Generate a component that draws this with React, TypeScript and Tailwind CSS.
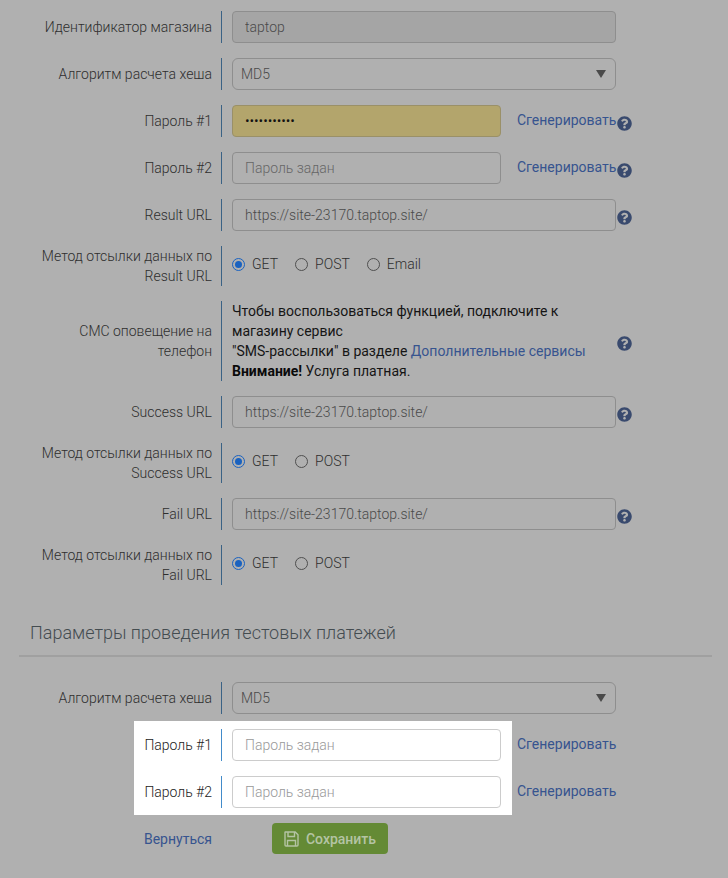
import type { ReactNode } from "react";
import { FaQuestionCircle } from "react-icons/fa";

const URL_VALUE = "https://site-23170.taptop.site/";

function Help() {
  return (
    <span className="mt-[5px] flex w-[16px] shrink-0 justify-center text-[15px] text-[#394a6e]">
      <FaQuestionCircle />
    </span>
  );
}

function SaveIcon() {
  return (
    <svg viewBox="0 0 15 16" className="h-[16px] w-[15px] fill-none stroke-[#b4c4a4] stroke-[1.4]">
      <path d="M1.2 1h10l2.8 2.8v10.2a1 1 0 0 1-1 1H2a1 1 0 0 1-1-1V1.2z" />
      <path d="M4 1v4.5h6.5V1" />
      <path d="M3.5 15V9.5h8V15" />
    </svg>
  );
}

function Row({
  label,
  lit = false,
  children,
}: {
  label: ReactNode;
  lit?: boolean;
  children: ReactNode;
}) {
  return (
    <div className="relative z-10 flex items-stretch">
      <div
        className={`flex w-[222px] shrink-0 items-center justify-end border-r pr-[9px] text-right font-light ${
          lit ? "border-[#428bca] text-[#222222]" : "border-[#3a6285] text-[#2e2e2e]"
        }`}
      >
        <span className="block max-w-[185px]">{label}</span>
      </div>
      <div className="flex min-w-0 flex-1 items-center pl-[10px]">{children}</div>
    </div>
  );
}

function TextField({
  value,
  placeholder,
  short = false,
  readOnly = false,
  tone = "plain",
  type = "text",
}: {
  value?: string;
  placeholder?: string;
  short?: boolean;
  readOnly?: boolean;
  tone?: "plain" | "disabled" | "autofill" | "lit";
  type?: string;
}) {
  const tones = {
    plain: "border-[#8e8e8e] bg-[#b0b0b0] text-[#4a4a4a] placeholder:text-[#666666]",
    disabled: "border-[#8e8e8e] bg-[#a5a5a5] text-[#4a4a4a]",
    autofill: "border-[#9a9068] bg-[#b3a56c] text-[#111111]",
    lit: "border-[#cccccc] bg-white text-[#555555] placeholder:text-[#999999]",
  };
  return (
    <input
      type={type}
      value={value}
      placeholder={placeholder}
      readOnly={readOnly || value !== undefined}
      className={`h-[32px] shrink-0 rounded-[4px] border px-[12px] text-[14px] font-light outline-none ${
        short ? "w-[269px]" : "w-[384px]"
      } ${tones[tone]}`}
    />
  );
}

function HashSelect() {
  return (
    <div className="relative w-[384px]">
      <select
        defaultValue="MD5"
        className="block h-[32px] w-full appearance-none rounded-[6px] border border-[#8e8e8e] bg-[#b0b0b0] px-[8px] text-[14px] font-light text-[#4a4a4a] outline-none"
      >
        <option>MD5</option>
      </select>
      <svg
        viewBox="0 0 10 8"
        className="pointer-events-none absolute right-[10px] top-[12px] h-[8px] w-[10px] fill-[#4a4a4a]"
      >
        <path d="M0 0h10L5 8z" />
      </svg>
    </div>
  );
}

function Generate() {
  return (
    <a href="#" className="ml-[16px] -translate-y-px text-[#37548f]">
      Сгенерировать
    </a>
  );
}

function Radio({ label, checked = false }: { label: string; checked?: boolean }) {
  return (
    <label className="flex items-center">
      <span
        className={`flex h-[13px] w-[13px] items-center justify-center rounded-full border ${
          checked ? "border-[#1a62c0]" : "border-[#4f4f4f]"
        }`}
      >
        {checked && <span className="h-[7px] w-[7px] rounded-full bg-[#1a62c0]" />}
      </span>
      <span className="ml-[7px] font-light text-[#2e2e2e]">{label}</span>
    </label>
  );
}

function RadioRow({ labels }: { labels: string[] }) {
  return (
    <div className="flex h-full items-start gap-[17px] self-start pt-[8px]">
      {labels.map((l, i) => (
        <Radio key={l} label={l} checked={i === 0} />
      ))}
    </div>
  );
}

export default function App() {
  return (
    <div className="relative min-h-[878px] overflow-hidden bg-[#b0b0b0] pt-[11px] text-[14px] leading-[20px] [font-family:Roboto,sans-serif]">
      <div className="flex flex-col gap-[15px]">
        <Row label="Идентификатор магазина">
          <TextField value="taptop" tone="disabled" />
        </Row>
        <Row label="Алгоритм расчета хеша">
          <HashSelect />
        </Row>
        <Row label="Пароль #1">
          <TextField type="password" value="•••••••••••" short tone="autofill" />
          <Generate />
          <Help />
        </Row>
        <Row label="Пароль #2">
          <TextField placeholder="Пароль задан" short />
          <Generate />
          <Help />
        </Row>
        <Row label="Result URL">
          <TextField value={URL_VALUE} />
          <Help />
        </Row>
        <Row label="Метод отсылки данных по Result URL">
          <RadioRow labels={["GET", "POST", "Email"]} />
        </Row>
        <Row label="СМС оповещение на телефон">
          <div className="w-[384px] shrink-0 text-[#151515]">
            Чтобы воспользоваться функцией, подключите к магазину сервис
            <br />
            "SMS-рассылки" в разделе{" "}
            <a href="#" className="text-[#37548f]">
              Дополнительные сервисы
            </a>
            <br />
            <b className="font-bold text-[#0a0a0a]">Внимание!</b> Услуга платная.
          </div>
          <Help />
        </Row>
        <Row label="Success URL">
          <TextField value={URL_VALUE} />
          <Help />
        </Row>
        <Row label="Метод отсылки данных по Success URL">
          <RadioRow labels={["GET", "POST"]} />
        </Row>
        <Row label="Fail URL">
          <TextField value={URL_VALUE} />
          <Help />
        </Row>
        <Row label="Метод отсылки данных по Fail URL">
          <RadioRow labels={["GET", "POST"]} />
        </Row>
      </div>

      <div className="ml-[19px] mr-[16px] mt-[36px] border-b-2 border-[#a0a0a0] pb-[10px] pl-[11px] text-[18px] font-light leading-[24px] text-[#444c50]">
        Параметры проведения тестовых платежей
      </div>

      <div className="mt-[25px] flex flex-col gap-[15px]">
        <Row label="Алгоритм расчета хеша">
          <HashSelect />
        </Row>
        <div className="relative flex flex-col gap-[15px]">
          {/* подсвеченная область поверх затемнения */}
          <div className="absolute -bottom-[7px] -top-[8px] left-[134px] z-0 w-[378px] bg-white" />
          <Row label="Пароль #1" lit>
            <TextField placeholder="Пароль задан" short tone="lit" />
            <Generate />
          </Row>
          <Row label="Пароль #2" lit>
            <TextField placeholder="Пароль задан" short tone="lit" />
            <Generate />
          </Row>
        </div>
        <div className="flex items-center">
          <a href="#" className="w-[212px] text-right text-[#37548f]">
            Вернуться
          </a>
          <button
            type="button"
            className="ml-[60px] flex h-[31px] w-[116px] items-center justify-center gap-[7px] rounded-[4px] bg-[#648a35] font-medium text-[#b4c4a4]"
          >
            <SaveIcon />
            Сохранить
          </button>
        </div>
      </div>
    </div>
  );
}
